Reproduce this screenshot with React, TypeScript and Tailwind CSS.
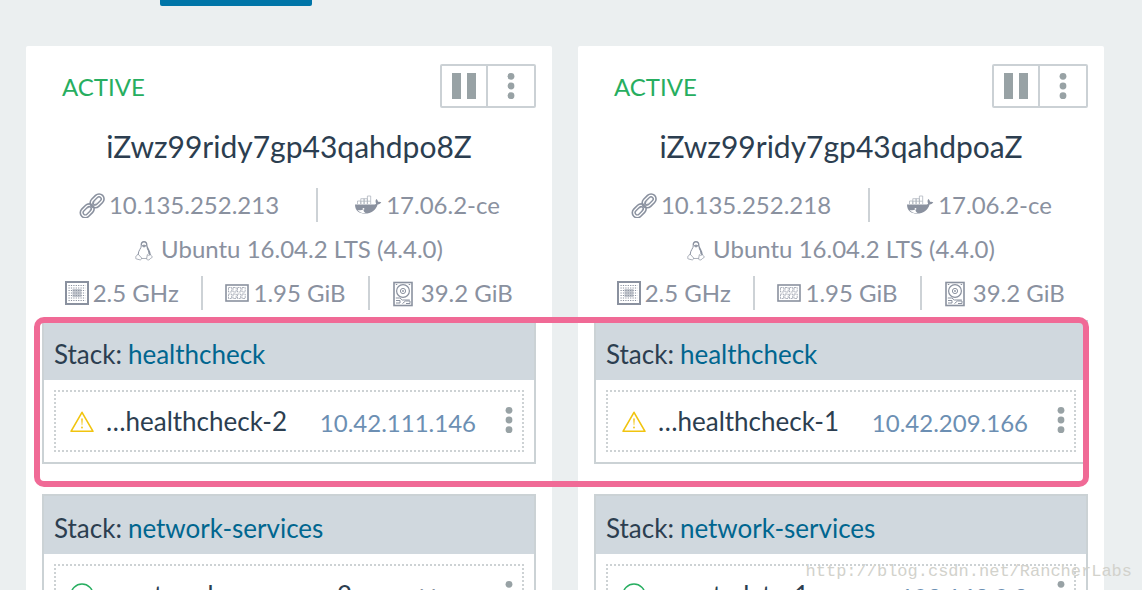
import type { ReactNode } from "react";

type Health = "warning" | "healthy";

interface Container {
  name: string;
  ip: string | null;
  health: Health;
}

interface Stack {
  name: string;
  containers: Container[];
}

interface Host {
  name: string;
  state: string;
  ip: string;
  docker: string;
  os: string;
  cpu: string;
  memory: string;
  disk: string;
  stacks: Stack[];
}

const HOSTS: Host[] = [
  {
    name: "iZwz99ridy7gp43qahdpo8Z",
    state: "ACTIVE",
    ip: "10.135.252.213",
    docker: "17.06.2-ce",
    os: "Ubuntu 16.04.2 LTS (4.4.0)",
    cpu: "2.5 GHz",
    memory: "1.95 GiB",
    disk: "39.2 GiB",
    stacks: [
      { name: "healthcheck", containers: [{ name: "…healthcheck-2", ip: "10.42.111.146", health: "warning" }] },
      { name: "network-services", containers: [{ name: "…network-manager-2", ip: null, health: "healthy" }] },
    ],
  },
  {
    name: "iZwz99ridy7gp43qahdpoaZ",
    state: "ACTIVE",
    ip: "10.135.252.218",
    docker: "17.06.2-ce",
    os: "Ubuntu 16.04.2 LTS (4.4.0)",
    cpu: "2.5 GHz",
    memory: "1.95 GiB",
    disk: "39.2 GiB",
    stacks: [
      { name: "healthcheck", containers: [{ name: "…healthcheck-1", ip: "10.42.209.166", health: "warning" }] },
      { name: "network-services", containers: [{ name: "…metadata-1", ip: "192.168.0.2", health: "healthy" }] },
    ],
  },
];

function DotsIcon() {
  return (
    <svg width="8" height="28" viewBox="0 0 8 28" fill="#98a2a5" aria-hidden="true">
      <circle cx="4" cy="4.3" r="3.4" />
      <circle cx="4" cy="14" r="3.4" />
      <circle cx="4" cy="23.7" r="3.4" />
    </svg>
  );
}

function PauseIcon() {
  return (
    <svg width="26" height="26" viewBox="0 0 26 26" fill="#98a2a5" aria-hidden="true">
      <rect x="1" width="9" height="26" />
      <rect x="16" width="9" height="26" />
    </svg>
  );
}

function LinkIcon() {
  return (
    <svg width="26" height="26" viewBox="0 0 26 26" fill="none" stroke="#8a919f" aria-hidden="true">
      <g transform="rotate(-45 13 14)">
        <rect x="-1.5" y="9" width="15.5" height="10" rx="5" strokeWidth="1.6" />
        <rect x="1.4" y="11.8" width="9.7" height="4.4" rx="2.2" strokeWidth="1.4" />
        <rect x="12.500" y="9" width="15.5" height="10" rx="5" strokeWidth="1.6" />
        <rect x="15.4" y="11.8" width="9.7" height="4.4" rx="2.2" strokeWidth="1.4" />
        <path d="M8.500 12.800h9.500M8.500 15.200h9.500" strokeWidth="0.9" />
      </g>
    </svg>
  );
}

function DockerIcon() {
  return (
    <svg width="28" height="20" viewBox="0 0 28 20" aria-hidden="true">
      <path
        d="M1 9.500h19c1.200 0 1.800-.3 2.100-1-.8-1.500-.7-3.200.2-4.400 1 .7 1.600 1.700 1.700 2.700 1.200-.3 2.400-.1 3.300.5-.6 1.300-1.900 2-3.700 2.100C21.600 15.500 17.300 18.500 11 18.500 5.500 18.500 1 16.200 1 9.500z"
        fill="#8a919f"
      />
      <path d="M3.500 9V6h3.300v3M6.800 9V3.700h3.300V9M10.100 9V3.700h3.300V9M13.400 9V1h3.300v8M6.800 6.200h9.900" fill="none" stroke="#b0b6bf" strokeWidth="0.8" />
      <circle cx="9.500" cy="13.800" r="0.900" fill="#fff" />
      <path d="M3.500 15c2.500.5 4.500.3 6-.5 0 1.700.6 2.700 2 3.500-3.400.4-6.200-.7-8-3z" fill="#fff" />
    </svg>
  );
}

function LinuxIcon() {
  return (
    <svg width="18" height="22" viewBox="0 0 20 22" fill="none" stroke="#8a919f" strokeWidth="0.8" aria-hidden="true" className="mt-1">
      <path d="M7 5c-.3-2.700.8-4.300 3-4.300s3.300 1.600 3.100 4.300c.1 2.800 3.900 5.600 3.600 10.500" strokeWidth="1.500" />
      <path d="M7 5c.2 3-3.500 5.300-3.400 9.800" strokeWidth="1.100" />
      <path d="M7.800 5.200l2.200 1.500 2.300-1.500L10 4.300z" fill="#8a919f" />
      <path d="M3.300 14.300l4.200 4.600c-.3 1.900-1.400 2.300-3 1.700l-3.300-.9c-.8-.4-.2-1.200-.3-2.700 1.300-.2 1.100-1.700 2.400-2.700z" />
      <path d="M13.700 15c.7.900 2.200 1.300 3.500-.4.400 1.700 1.700 2.300 2.100 3.300-1.300 1-2.500 1.500-3.700 2.900-1.500.6-2.700 0-2.600-1.600z" />
      <path d="M7.300 19.300h5.800" />
      <path d="M13.500 7c1 2.500 3 4 3 7.500l-1.500-.2c0-2.500-1-4.500-2-6z" fill="#8a919f" stroke="none" />
    </svg>
  );
}

function CpuIcon() {
  return (
    <svg width="24" height="24" viewBox="0 0 24 24" fill="none" stroke="#8a919f" aria-hidden="true">
      <rect x="1" y="1" width="22" height="22" strokeWidth="2" />
      {[4.5, 7, 9.5, 12, 14.5, 17, 19.5].map((y) => (
        <path key={y} d={`M3.500 ${y}h17`} strokeWidth="1.200" strokeDasharray="1.200 1.200" />
      ))}
      <rect x="7.500" y="8" width="9" height="8" fill="#8a919f" fillOpacity="0.5" stroke="none" />
    </svg>
  );
}

function MemoryIcon() {
  return (
    <svg width="24" height="18" viewBox="0 0 24 18" fill="none" stroke="#8a919f" aria-hidden="true">
      <rect x="1" y="1" width="22" height="16" strokeWidth="1.600" />
      {[3.500, 8, 12.500, 17].map((x) => (
        <g key={x} strokeWidth="0.700" strokeDasharray="2 0.600">
          <rect x={x} y="3.500" width="3.200" height="4.500" />
          <rect x={x} y="10" width="3.200" height="4.500" />
        </g>
      ))}
    </svg>
  );
}

function DiskIcon() {
  return (
    <svg width="20" height="26" viewBox="0 0 20 26" fill="none" stroke="#8a919f" aria-hidden="true" className="mt-0.5">
      <rect x="1" y="1.500" width="18" height="23" strokeWidth="1.600" />
      <circle cx="10" cy="10" r="6.400" strokeWidth="1.200" />
      <circle cx="10" cy="10" r="2.600" strokeWidth="1" />
      <circle cx="10" cy="10" r="0.900" fill="#8a919f" stroke="none" />
      <path d="M2.800 3.500h1.500M15.700 3.500h1.500M2.800 17h4l2.500 2h7.500M3 19.500h4v2.500H3M9.500 22.500l3-2.500h4.500v2.500h-4" strokeWidth="1" />
    </svg>
  );
}

function HealthIcon({ health }: { health: Health }) {
  if (health === "warning") {
    return (
      <svg width="24" height="24" viewBox="0 0 24 24" fill="none" stroke="#f1c40f" className="shrink-0" aria-label="Warning">
        <path d="M12 3.300L23 22.300H1z" strokeWidth="1.600" strokeLinejoin="round" />
        <path d="M11.200 9.500h1.600l-.5 6.800h-.6z" fill="#f1c40f" stroke="none" />
        <circle cx="12" cy="18.500" r="0.900" fill="#f1c40f" stroke="none" />
      </svg>
    );
  }
  return (
    <svg width="24" height="24" viewBox="0 0 24 24" fill="none" stroke="#27ae60" className="shrink-0" aria-label="Healthy">
      <circle cx="12" cy="12" r="11" strokeWidth="1.500" />
      <path d="M7 12.500l3.500 3.500 6.500-8" strokeWidth="1.500" />
    </svg>
  );
}

function Fact({ icon, children, divider, wide }: { icon: ReactNode; children: ReactNode; divider?: boolean; wide?: boolean }) {
  return (
    <div
      className={`flex h-[34px] items-center justify-center ${wide ? "gap-2" : "gap-1"} ${
        divider ? "border-r-2 border-[#cdd2d6]" : ""
      }`}
    >
      {icon}
      <span>{children}</span>
    </div>
  );
}

function ContainerRow({ container }: { container: Container }) {
  const { name, ip, health } = container;
  return (
    <li className="m-2.5 flex h-[62px] items-center border-2 border-dotted border-[#cdd2d4] pl-3.5">
      <HealthIcon health={health} />
      <span className="ml-3 flex-1 truncate text-[26px] leading-8 text-[#2c3e50]">{name}</span>
      <span className={`mr-5 pt-1 text-2xl ${ip ? "text-[#6c8fb3]" : "text-[#8a919f]"}`}>{ip ?? "None"}</span>
      <button type="button" aria-label={`Actions for ${name}`} className="flex h-full w-[26px] items-center justify-center pb-0.5">
        <DotsIcon />
      </button>
    </li>
  );
}

function StackPanel({ stack }: { stack: Stack }) {
  return (
    <section className="border-2 border-[#cbd2d5]">
      <h3 className="flex h-[58px] items-center gap-1.5 bg-[#d0d8de] px-2.5 pt-1.5 text-[26px] text-[#2c3e50]">
        <span>Stack:</span>
        <a href="#" className="text-[#00668f]">
          {stack.name}
        </a>
      </h3>
      <ul>
        {stack.containers.map((c) => (
          <ContainerRow key={c.name} container={c} />
        ))}
      </ul>
    </section>
  );
}

function HostCard({ host }: { host: Host }) {
  return (
    <article className="min-w-0 rounded-t-xs bg-white px-4 pt-[18px]">
      <header className="flex h-11 items-center justify-between pl-5">
        <span className="pt-0.5 text-2xl text-[#27ae60]">{host.state}</span>
        <div className="flex h-11 rounded-xs border-2 border-[#cbd1d5]">
          <button type="button" aria-label="Pause host" className="flex w-[46px] items-center justify-center border-r-2 border-[#cbd1d5]">
            <PauseIcon />
          </button>
          <button type="button" aria-label="Host actions" className="flex w-[46px] items-center justify-center">
            <DotsIcon />
          </button>
        </div>
      </header>

      <h2 className="mt-[18px] text-center text-[30px] leading-10 text-[#2c3e50]">{host.name}</h2>

      <div className="mt-[22px] flex flex-col gap-2.5 text-2xl text-[#8a919f]">
        <div className="grid grid-cols-[19fr_15fr]">
          <Fact icon={<LinkIcon />} divider>
            {host.ip}
          </Fact>
          <Fact icon={<DockerIcon />}>{host.docker}</Fact>
        </div>
        <Fact icon={<LinuxIcon />} wide>
          {host.os}
        </Fact>
        <div className="grid grid-cols-[33fr_34fr_34fr]">
          <Fact icon={<CpuIcon />} divider>
            {host.cpu}
          </Fact>
          <Fact icon={<MemoryIcon />} divider>
            {host.memory}
          </Fact>
          <Fact icon={<DiskIcon />} wide>
            {host.disk}
          </Fact>
        </div>
      </div>

      <div className="mt-2.5 flex flex-col gap-[30px]">
        {host.stacks.map((s) => (
          <StackPanel key={s.name} stack={s} />
        ))}
      </div>
    </article>
  );
}

export default function App() {
  return (
    <main className="relative h-screen overflow-hidden bg-[#ebeff0] pr-[38px] pl-[26px] font-['Lato',sans-serif]">
      <div className="ml-[134px] h-1.5 w-[152px] rounded-b-xs bg-[#0075a8]" />
      <div className="mt-10 grid grid-cols-2 gap-[26px]">
        {HOSTS.map((h) => (
          <HostCard key={h.name} host={h} />
        ))}
      </div>

      {/* highlight drawn across both healthcheck stacks */}
      <div className="pointer-events-none absolute top-[317px] right-[53px] left-[34px] h-[170px] rounded-[10px] border-6 border-[#f06a96]" />
      <span className="pointer-events-none absolute right-2.5 bottom-1.5 font-['Liberation_Mono',monospace] text-[17px] leading-6 text-[#d2d2cc]">
        http://blog.csdn.net/RancherLabs
      </span>
    </main>
  );
}
